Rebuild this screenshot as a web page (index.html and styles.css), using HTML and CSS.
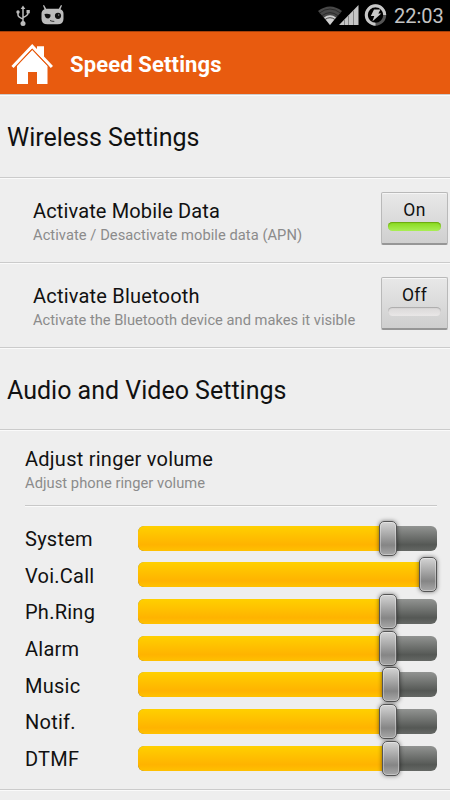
FILE: index.html
```html
<!DOCTYPE html>
<html lang="en">
<head>
<meta charset="utf-8">
<title>Speed Settings</title>
<link rel="stylesheet" href="styles.css">
</head>
<body>
<div class="status">
  <svg class="status-left" width="70" height="31" viewBox="0 0 70 31">
    <g fill="none" stroke="#bcbcbc" stroke-width="1.500">
      <path d="M23 8v14M18 12v3q0 2 5 4M28 12v1q0 2.500-5 4.500"/>
    </g>
    <g fill="#bcbcbc">
      <path d="M23 5.500l2.300 3.500h-4.600z"/><circle cx="23" cy="23.500" r="2.500"/><circle cx="18" cy="12" r="1.700"/><path d="M26.500 10h3.300v3.300h-3.300z"/>
      <path d="M44 5l2.200 3.800h12.600L61 5l1 .5-1.500 3.800q3 1 3 4.500v5q0 5.500-6 5.500h-10q-6 0-6-5.500v-5q0-3.500 3-4.500L43 5.500z"/>
    </g>
    <path d="M44.500 14q3-.8 6 .5.500 3-2.300 4-3.200 0-3.700-4.500z" fill="#111"/>
    <circle cx="58" cy="15.800" r="3.100" fill="#111"/><circle cx="58.700" cy="15" r=".7" fill="#999"/>
    <path d="M50 20.500l2 .7 2.300.2" stroke="#333" fill="none"/>
  </svg>
  <svg class="status-right" width="72" height="31" viewBox="316 0 72 31">
    <path d="M318 11q12-9 24 0L330 25z" fill="#484848"/>
    <path d="M324 17.500q6-4.500 12 0L330 25z" fill="#d0d0d0"/>
    <path d="M319.500 13q10.500-8 21 0M321.800 15.800q8.200-6.300 16.400 0M325 19.500q5-3.600 10 0" stroke="#222" stroke-width=".8" fill="none"/>
    <path d="M339 25L358.500 5v20z" fill="#c5c5c5"/>
    <path d="M344.500 19.500v5.500M348.500 15.500v9.500M353.500 10.500v14.500" stroke="#858585" stroke-width="1"/>
    <circle cx="375.500" cy="15" r="9.200" fill="none" stroke="#555" stroke-width="3"/>
    <path d="M375.500 24.200A9.200 9.200 0 1 1 384.700 15" fill="none" stroke="#c8c8c8" stroke-width="3"/>
    <path d="M374 9.500h6.500l-2.200 4h3l-9 8 2-5.500h-3.500z" fill="#c8c8c8"/>
  </svg>
  <span class="clock">22:03</span>
</div>
<header class="header">
  <svg class="home" width="44" height="44" viewBox="0 0 44 44">
    <path d="M2.500 26L22.200 5.300 41.900 26" fill="none" stroke="#fff" stroke-width="3"/>
    <path d="M27 5.300h7V16.500L27 9.500z" fill="#fff"/>
    <path d="M22.200 9L37.500 25V43H27V31H18v12H7V25z" fill="#fff"/>
    <path d="M6 25.200L22.200 8.200l16.200 17" fill="none" stroke="#e85b0f" stroke-width="1"/>
  </svg>
  <h1 class="title">Speed Settings</h1>
</header>
<main>
  <section class="section s1"><h2>Wireless Settings</h2></section>
  <section class="row">
    <div><h3 class="t1">Activate Mobile Data</h3><p class="p1">Activate / Desactivate mobile data (APN)</p></div>
    <div class="toggle on"><span>On</span><i></i></div>
  </section>
  <section class="row">
    <div><h3 class="t2">Activate Bluetooth</h3><p>Activate the Bluetooth device and makes it visible</p></div>
    <div class="toggle"><span>Off</span><i></i></div>
  </section>
  <section class="section s2"><h2>Audio and Video Settings</h2></section>
  <section class="volume">
    <div class="intro"><h3 class="t3">Adjust ringer volume</h3><p class="p1">Adjust phone ringer volume</p></div>
    <div class="sliders">
      <div class="slider"><span>System</span><div class="track"><b></b><i></i></div></div>
      <div class="slider full"><span>Voi.Call</span><div class="track"><b></b><i></i></div></div>
      <div class="slider"><span>Ph.Ring</span><div class="track"><b></b><i></i></div></div>
      <div class="slider"><span>Alarm</span><div class="track"><b></b><i></i></div></div>
      <div class="slider media"><span>Music</span><div class="track"><b></b><i></i></div></div>
      <div class="slider"><span>Notif.</span><div class="track"><b></b><i></i></div></div>
      <div class="slider media"><span>DTMF</span><div class="track"><b></b><i></i></div></div>
    </div>
  </section>
</main>
</body>
</html>
```
FILE: styles.css
```css
* { box-sizing: border-box; margin: 0; padding: 0; }
body { width: 450px; height: 800px; overflow: hidden; background: #eeeeee; color: #111; font-family: Roboto, "Liberation Sans", sans-serif; }
h1, h2, h3, p { font-weight: 400; white-space: nowrap; }
.status { height: 31px; background: #000; display: flex; align-items: center; }
.status-right { margin-left: 246px; }
.clock { margin-left: 6px; color: #c4c4c4; font-size: 20px; line-height: 31px; padding-top: 1px; }
.header { height: 63px; background: #e85b0f; border-top: 1px solid #a7410b; display: flex; align-items: center; padding: 0 0 0 10px; }
.home { margin-top: -1px; }
.title { margin-left: 16px; color: #fff; font-size: 22px; font-weight: 700; line-height: 30px; padding-top: 3px; letter-spacing: 0.13px; }
main { border-top: 1px solid #ccc; box-shadow: inset 0 1px #fafafa; }
.section, .row, .volume { border-bottom: 1px solid #cbcbcb; box-shadow: 0 1px #fafafa; }
.section { padding: 4px 0 0 7px; display: flex; align-items: center; }
.section h2 { font-size: 25px; line-height: 30px; }
.s1 { height: 83px; }
.s2 { height: 82px; }
.row { height: 85px; display: flex; justify-content: space-between; padding: 14px 2px 0 33px; }
h3 { font-size: 20px; line-height: 24px; margin-top: 7px; }
.t1 { letter-spacing: 0.14px; }
.t2 { letter-spacing: 0.2px; }
.t3 { letter-spacing: 0.25px; }
p { font-size: 14.7px; line-height: 18px; color: #8b8b8b; margin-top: 3px; }
.p1 { letter-spacing: 0.05px; }
.toggle { width: 67px; height: 53px; border: 1px solid #b9b9b9; border-bottom: 2px solid #969696; border-radius: 2px; background: linear-gradient(#e8e8e8, #cfcfcf); box-shadow: inset 0 1px #f5f5f5; display: flex; flex-direction: column; align-items: center; font-size: 17.5px; }
.toggle span { line-height: 20px; margin-top: 7px; letter-spacing: 0.3px; }
.toggle i { width: 53px; height: 9px; margin-top: 2px; border-radius: 5px; background: linear-gradient(#d9d7d7, #e9e7e7); box-shadow: inset 0 1px 1px #aaa; }
.toggle.on i { background: linear-gradient(#87d81c, #a9ee55); box-shadow: inset 0 1px 1px #6ba80f; }
.volume { height: 360px; padding: 10px 13px 0 25px; }
.intro { height: 59px; border-bottom: 1px solid #c8c8c8; box-shadow: 0 1px #fafafa; }
.sliders { padding-top: 14px; }
.slider { height: 36.67px; display: flex; align-items: center; font-size: 20px; letter-spacing: 0.25px; }
.slider > span { width: 112.5px; line-height: 24px; padding-top: 1.4px; }
.track { position: relative; width: 299.5px; height: 25px; border-radius: 6px; background: linear-gradient(#929492, #555855 75%, #656865); }
.track b { display: block; width: 250px; height: 25px; border-radius: 6px 0 0 6px; background: linear-gradient(#ffd000, #ffb300 75%, #ffc100); }
.track i { position: absolute; left: 241.5px; top: -5px; width: 18px; height: 35px; border: 1px solid #555; border-radius: 5px; background: linear-gradient(#d4d4d4, #858585 70%, #a8a8a8); box-shadow: inset 0 0 0 1px rgba(255,255,255,.35), 0 0 4px rgba(0,0,0,.5); }
.full b { width: 299.5px; border-radius: 6px; }
.full i { left: 281.5px; }
.media i { left: 244px; }
```
